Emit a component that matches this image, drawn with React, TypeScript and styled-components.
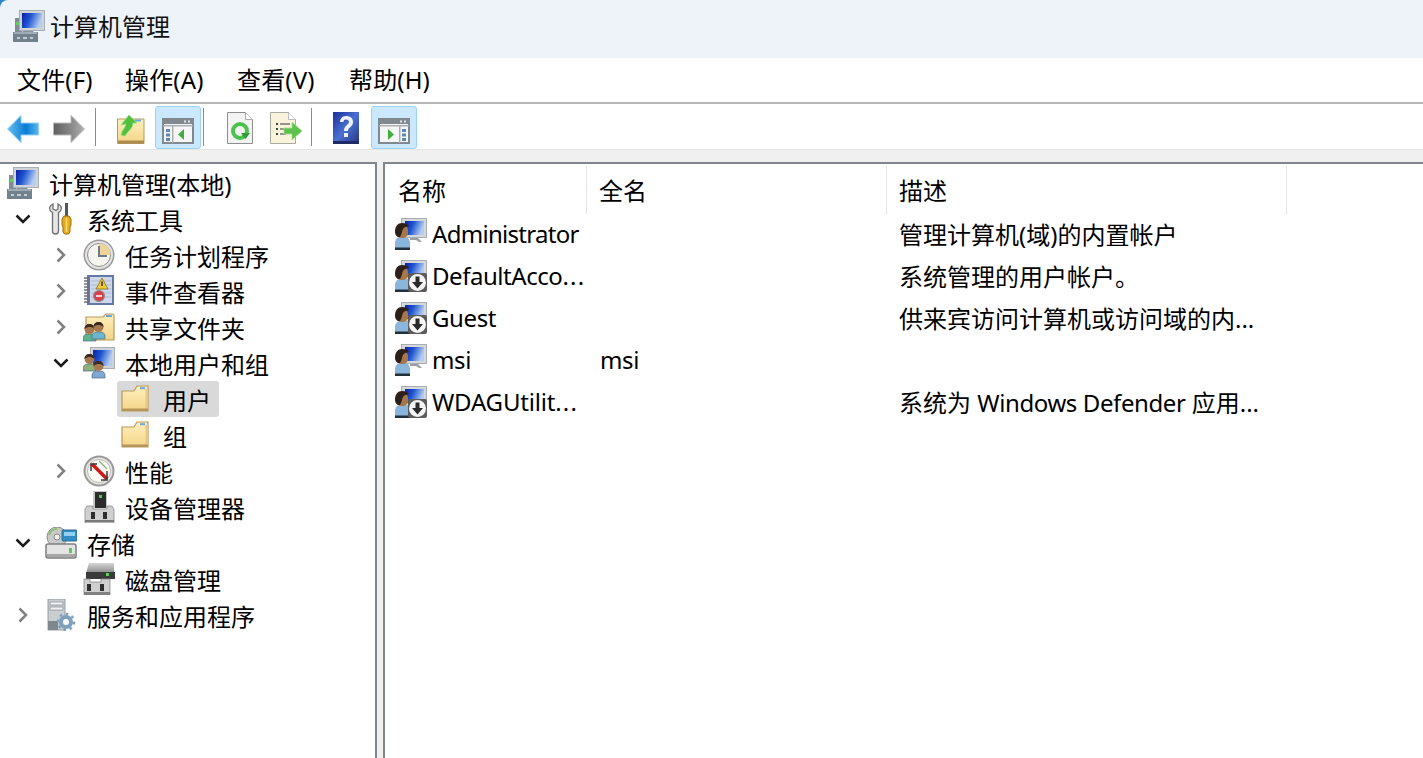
import React from 'react';
import styled, { createGlobalStyle } from 'styled-components';

const Global = createGlobalStyle`
  html, body { margin: 0; padding: 0; height: 100%; overflow: hidden; background: #fff; }
  #root { height: 100%; }
  * { box-sizing: border-box; }
  body { font-family: "Noto Sans", "Noto Sans CJK SC", "Liberation Sans", sans-serif; color: #000; }
`;

const Window = styled.div`
  width: 1423px; height: 758px; display: flex; flex-direction: column; overflow: hidden;
  background: #2f86c6;
`;
const TitleBar = styled.div`
  height: 58px; flex: none; display: flex; align-items: center; gap: 5px; padding: 0 0 6px 13px;
  background: #eef3fa; border-top-left-radius: 8px; font-size: 24px; color: #111;
`;
const TitleText = styled.span`
  padding-bottom: 2px;
`;
const MenuBar = styled.div`
  height: 44px; flex: none; display: grid; grid-template-columns: 108px 112px 112px auto; align-items: center; padding-left: 17px;
  background: #fff; font-size: 24px; letter-spacing: 0.15px;
`;
const MenuItem = styled.span`
  display: block; line-height: 44px; white-space: nowrap;
`;
const Rule = styled.div`
  height: 2px; flex: none; background: #b5b5b5;
`;
const Toolbar = styled.div`
  height: 46px; flex: none; display: flex; align-items: flex-start; padding-top: 2px; background: #fff; border-bottom: 1px solid #e6e6e6;
`;
const ToolButton = styled.div<{ $active?: boolean; $ml?: number; $pt: number }>`
  width: 46px; height: 43px; flex: none; display: flex; align-items: flex-start; justify-content: center;
  margin-left: ${p => p.$ml ?? 0}px; padding-top: ${p => p.$pt}px; border-radius: 3px;
  background: ${p => (p.$active ? '#cce8ff' : 'transparent')};
  border: 1px solid ${p => (p.$active ? '#99d1ff' : 'transparent')};
`;
const ToolSep = styled.div<{ $l: number; $r: number }>`
  width: 1px; height: 38px; flex: none; background: #8a8a8a;
  margin: 2px ${p => p.$r}px 0 ${p => p.$l}px;
`;
const Body = styled.div`
  flex: 1; min-height: 0; display: flex; gap: 6px; padding-top: 12px; background: #f0f0f0;
`;
const TreePane = styled.div`
  width: 377px; flex: none; background: #fff; padding-top: 1px;
  border-top: 2px solid #80868c; border-right: 2px solid #80868c;
`;
const TreeRow = styled.div<{ $level: number }>`
  height: 36px; display: flex; align-items: center; font-size: 24px; white-space: nowrap;
  padding-left: ${p => (p.$level === 0 ? 7 : 7 + 38 * (p.$level - 1))}px;
`;
const CaretSlot = styled.div`
  width: 38px; flex: none; display: flex; align-items: center; padding-left: 8px;
`;
const TreeLabel = styled.div<{ $selected?: boolean }>`
  height: 36px; display: flex; align-items: center; gap: 10px; border-radius: 3px; letter-spacing: 0.02px;
  ${p => p.$selected && 'background: #d9d9d9; margin-left: -4px; padding: 0 8px 0 4px;'}
`;
const ListPane = styled.div`
  flex: 1; min-width: 0; background: #fff; padding-top: 2px;
  border-top: 2px solid #80868c; border-left: 2px solid #80868c;
`;
const ListHead = styled.div`
  height: 48px; display: flex; font-size: 24px; margin-bottom: -1px;
`;
const HeadCell = styled.div<{ $w: number; $pad: number }>`
  width: ${p => p.$w}px; flex: none; display: flex; align-items: center;
  padding: 0 0 2px ${p => p.$pad}px;
  border-right: 1px solid #e5e5e5;
`;
const ListRow = styled.div`
  height: 42px; display: flex; align-items: center; font-size: 24px; white-space: nowrap;
`;
const NameCell = styled.div`
  width: 202px; flex: none; display: flex; align-items: center; gap: 5px; padding-left: 10px;
`;
const NameText = styled.span<{ $ls: number }>`
  padding-bottom: 2px; letter-spacing: ${p => p.$ls}px;
`;
const Dots = styled.span`
  letter-spacing: 1.2px;
`;
const FullCell = styled.div`
  width: 299px; flex: none; padding: 0 0 2px 13px; letter-spacing: -0.4px;
`;
const DescCell = styled.div`
  flex: 1; padding: 0 0 2px 13px;
`;
const Latin = styled.span`
  letter-spacing: -0.4px;
`;

const Svg = styled.svg`
  display: block; flex: none; filter: blur(0.35px);
`;
const I: React.FC<{ w?: number; h?: number; vb?: string; children: React.ReactNode }> = ({ w = 32, h = 32, vb = '0 0 32 32', children }) => (
  <Svg width={w} height={h} viewBox={vb}>{children}</Svg>
);

const HiddenSvg = styled.svg`
  position: absolute; width: 0; height: 0;
`;
const Defs = () => (
  <HiddenSvg>
    <defs>
      <linearGradient id="scr" x1="0" x2="1" y1="0" y2="0.3">
        <stop offset="0" stopColor="#0b1fa8" /><stop offset=".45" stopColor="#1e55d0" /><stop offset="1" stopColor="#b4cdf2" />
      </linearGradient>
      <linearGradient id="fold" x1="0" x2="0" y1="0" y2="1">
        <stop offset="0" stopColor="#fff0bd" /><stop offset="1" stopColor="#f4d488" />
      </linearGradient>
      <linearGradient id="blueArrow" x1="0" x2="1" y1="0" y2="0">
        <stop offset="0" stopColor="#67bff0" /><stop offset=".6" stopColor="#0a7ad6" /><stop offset="1" stopColor="#5cb8ee" />
      </linearGradient>
      <linearGradient id="grayArrow" x1="0" x2="1" y1="0" y2="0">
        <stop offset="0" stopColor="#5f5f5f" /><stop offset=".6" stopColor="#8b8b8b" /><stop offset="1" stopColor="#b0b0b0" />
      </linearGradient>
      <linearGradient id="helpBg" x1="0" x2="1" y1="0" y2="1">
        <stop offset="0" stopColor="#1a2f9c" /><stop offset=".5" stopColor="#4a70d0" /><stop offset="1" stopColor="#26357f" />
      </linearGradient>
      <linearGradient id="disk" x1="0" x2="0" y1="0" y2="1">
        <stop offset="0" stopColor="#d6d6d6" /><stop offset="1" stopColor="#8a8a8a" />
      </linearGradient>
    </defs>
  </HiddenSvg>
);

const Monitor: React.FC<{ x: number; y: number; w: number; h: number }> = ({ x, y, w, h }) => (
  <g>
    <rect x={x} y={y} width={w} height={h} fill="#a9b0b5" />
    <rect x={x + 1} y={y + 1} width={w - 2} height={h - 2} fill="#cfd4d8" />
    <rect x={x + 3} y={y + 3} width={w - 6} height={h - 6} fill="url(#scr)" />
  </g>
);

const ComputerIcon = () => (
  <I>
    <rect x="2" y="8" width="7" height="14" fill="#7f8c93" />
    <rect x="3" y="12" width="3" height="3" fill="#5fd05f" />
    <rect x="9" y="16" width="4" height="5" fill="#223" />
    <Monitor x={6} y={0} w={26} h={21} />
    <path d="M10 21h10l2 2H8z" fill="#8a9298" />
    <rect x="0" y="22" width="25" height="10" fill="#72828c" />
    <rect x="1" y="22" width="23" height="2" fill="#9eacb5" />
    <path d="M4 27h3v2H4zM10 27h4v2h-4zM17 27h3v2h-3z" fill="#c3ccd2" />
  </I>
);
const ToolsIcon = () => (
  <I>
    <g transform="translate(3 0)">
      <path d="M5 1c-3 1-4 4-3 6 .5 1.200 1.500 2 2.500 2.500V28c0 2 1 3 3 3s3-1 3-3V9.500c1-.5 2-1.300 2.500-2.500 1-2 0-5-3-6v5l-2 1.500-3-1.500z" fill="#e6e6e6" stroke="#6f6f6f" strokeWidth="1.300" />
      <rect x="17" y="0" width="3" height="13" fill="#555" />
      <path d="M16 13h5l2 3v6l-1 2v5l-1.500 2h-4l-1.500-2v-5l-1-2v-6z" fill="#e7ab1c" stroke="#9a6a10" strokeWidth="1" />
      <path d="M18.500 15v14" stroke="#ffdd77" strokeWidth="1.500" />
    </g>
  </I>
);
const ClockIcon = () => (
  <I>
    <circle cx="16" cy="16" r="15.500" fill="#9a9a9a" />
    <circle cx="16" cy="16" r="14" fill="#e4e4e4" />
    <circle cx="16" cy="16" r="11.500" fill="#f6f4ee" stroke="#8d8d8d" strokeWidth="1" />
    <path d="M16 16V4.500A11.500 11.500 0 0 1 27.500 16z" fill="#eed39d" />
    <path d="M16 7v10h8" fill="none" stroke="#6e7a86" strokeWidth="2" />
  </I>
);
const EventIcon = () => (
  <I>
    <rect x="4" y="0" width="27" height="30" fill="#6478a8" />
    <rect x="7" y="2" width="22" height="26" fill="#cfd8ea" />
    <path d="M8 6h20M8 10h20M8 14h20M8 18h20M8 22h20" stroke="#aebbd4" strokeWidth="1" />
    <path d="M1 3h5M1 6h5M1 9h5M1 12h5M1 15h5M1 18h5M1 21h5M1 24h5M1 27h5" stroke="#6e6e78" strokeWidth="1.500" />
    <path d="M19 3l6 11h-12z" fill="#f3c93a" stroke="#8c7216" strokeWidth=".8" />
    <rect x="18.300" y="6.500" width="1.500" height="4.500" fill="#333" />
    <circle cx="16" cy="21" r="5.500" fill="#d8404a" stroke="#8f8f8f" strokeWidth="1.200" />
    <rect x="13" y="20" width="6" height="2" fill="#f4d6d6" />
  </I>
);
const FolderIcon = () => (
  <I>
    <path d="M1 8h12l3-5h11v25H1z" fill="url(#fold)" stroke="#b59a5c" strokeWidth="1.200" />
    <path d="M16 3l-3 5" stroke="#c9ab68" strokeWidth="1" />
    <rect x="19" y="4.200" width="5" height="2" fill="#6ea7dd" />
    <rect x="24.500" y="6" width="2.500" height="22" fill="#e8c882" />
    <rect x="1" y="25.500" width="26" height="2.500" fill="#b5955a" />
  </I>
);
const Person: React.FC<{ x: number; y: number; body?: string }> = ({ x, y, body = '#7fb0d8' }) => (
  <g>
    <path d={`M${x} ${y + 17}v-3c0-2 2-4 4-4h5c2 0 4 2 4 4v3z`} fill={body} stroke="#4d6a85" strokeWidth=".7" />
    <circle cx={x + 6.500} cy={y + 5} r="5" fill="#a67850" />
    <path d={`M${x + 1.500} ${y + 5}c0-3 2-5 5-5s5 2 5 5c-2-1.500-3-2-5-2s-3 .5-5 2z`} fill="#3c2a20" />
  </g>
);
const SharedIcon = () => (
  <I>
    <path d="M3 6h17l3-3h7l1 1v25H3z" fill="url(#fold)" stroke="#b59a5c" strokeWidth="1.200" />
    <rect x="23" y="4" width="6" height="2" fill="#6ea7dd" />
    <Person x={0} y={13} body="#5db38a" />
    <Person x={9} y={11} body="#6cb6cf" />
  </I>
);
const GroupIcon = () => (
  <I>
    <Monitor x={7} y={0} w={25} h={22} />
    <Person x={0} y={7} body="#8db07a" />
    <Person x={9} y={14} body="#7fa8d2" />
  </I>
);
const PerfIcon = () => (
  <I>
    <circle cx="16" cy="16" r="15.500" fill="#999" />
    <circle cx="16" cy="16" r="13.500" fill="#e6e6e2" />
    <circle cx="16" cy="16" r="11.500" fill="#fbfaf4" stroke="#b9b9b0" strokeWidth="1" />
    <path d="M9 9l15 15" stroke="#d01818" strokeWidth="3.500" />
    <path d="M8 16V9h6M24 16v9h-6" fill="none" stroke="#3b3b3b" strokeWidth="1.500" />
    <path d="M16 6l8 8" stroke="#89b98c" strokeWidth="1.500" />
  </I>
);
const DeviceIcon = () => (
  <I>
    <rect x="10" y="0" width="14" height="17" fill="#c8c8c8" />
    <rect x="12" y="1" width="11" height="16" fill="#2c2c2c" />
    <rect x="16" y="4" width="3" height="3" fill="#4ed04e" />
    <path d="M4 15h6v3h14v-3h5l2 3v14H2V18z" fill="#cfcfcf" stroke="#8c8c8c" strokeWidth=".8" />
    <rect x="8" y="21" width="4" height="7" fill="#2d2d2d" />
    <rect x="20" y="21" width="4" height="7" fill="#2d2d2d" />
    <rect x="2" y="29" width="29" height="2" fill="#7a7a7a" />
  </I>
);
const StorageIcon = () => (
  <I>
    <circle cx="12" cy="10" r="10" fill="#c9c9c9" stroke="#8a8a8a" />
    <circle cx="12" cy="10" r="3" fill="#f2f2f2" stroke="#888" />
    <path d="M4 8a8 8 0 0 1 8-6" stroke="#8dbf6a" strokeWidth="2" fill="none" />
    <rect x="17" y="3" width="15" height="11" rx="1" fill="#2f8ec6" stroke="#2a6c96" />
    <rect x="19" y="5" width="11" height="4" fill="#8fd0ef" />
    <rect x="1" y="17" width="30" height="14" rx="2" fill="#e4e4e4" stroke="#7e7e7e" strokeWidth="1.500" />
    <rect x="2" y="27" width="28" height="3" fill="#a8a8a8" />
    <rect x="24" y="21" width="3" height="5" fill="#58cc58" />
  </I>
);
const DiskIcon = () => (
  <I>
    <path d="M6 0h25v10H3z" fill="url(#disk)" />
    <rect x="3" y="9" width="29" height="7" fill="#3a3a3a" />
    <rect x="23" y="10" width="3" height="3" fill="#56d456" />
    <path d="M1 16h6v3h11v-3h9v16H1z" fill="#cfcfcf" stroke="#8c8c8c" strokeWidth=".8" />
    <rect x="4" y="21" width="4" height="7" fill="#2d2d2d" />
    <rect x="17" y="21" width="4" height="7" fill="#2d2d2d" />
    <rect x="1" y="29" width="26" height="3" fill="#808080" />
  </I>
);
const ServicesIcon = () => (
  <I>
    <rect x="3" y="0" width="17" height="31" fill="#c9ced2" stroke="#868c90" strokeWidth=".8" />
    <rect x="5" y="3" width="13" height="3" fill="#eef1f3" stroke="#7a8085" strokeWidth=".6" />
    <rect x="5" y="8" width="13" height="3" fill="#eef1f3" stroke="#7a8085" strokeWidth=".6" />
    <rect x="3" y="22" width="10" height="9" fill="#7d888f" />
    <g transform="translate(21 23)">
      <circle r="7" fill="#7fa0bd" />
      <circle r="8" fill="none" stroke="#7fa0bd" strokeWidth="2.500" strokeDasharray="2.500 3.700" />
      <circle r="3" fill="#fff" />
    </g>
  </I>
);
const UserIcon: React.FC<{ down?: boolean }> = ({ down }) => (
  <I>
    <rect x="6" y="0" width="26" height="20" fill="#a7adb2" />
    <rect x="7" y="1" width="24" height="18" fill="#d4d8db" />
    <rect x="10" y="3" width="19" height="14" fill="url(#scr)" />
    <path d="M15 20h8l4 4h-3l-3-2h-6z" fill="#9aa0a5" />
    <path d="M0 31v-6c0-3 2-6 5-6h5c3 0 5 3 5 6v6z" fill="#8ab6dc" />
    <rect x="0" y="29.500" width="15" height="2.500" fill="#22303b" />
    <rect x="1" y="7" width="12" height="13" rx="5" fill="#a87748" />
    <path d="M0 14c0-6 3-9 7-9s6 1 7 3c-3 .5-5 1-6 3-1 1.500-1 5-3 8H3c-2-1-3-3-3-5z" fill="#2c2019" />
    {down && (
      <g>
        <rect x="13" y="13" width="19" height="19" rx="2" fill="#5c5c5c" />
        <circle cx="22.500" cy="22.500" r="8.500" fill="#f5f5f5" />
        <path d="M20.500 16.500h4v5.500h3.500l-5.500 6.500-5.500-6.500h3.500z" fill="#2a2a2a" />
      </g>
    )}
  </I>
);

const Caret: React.FC<{ open?: boolean }> = ({ open }) => (
  <Svg width="16" height="16" viewBox="0 0 16 16">
    {open
      ? <path d="M1.500 4.500L8 11l6.500-6.500" fill="none" stroke="#1a1a1a" strokeWidth="2.500" />
      : <path d="M4.500 1.500L11 8l-6.500 6.500" fill="none" stroke="#808080" strokeWidth="2.500" />}
  </Svg>
);

const BackIcon = () => (
  <I h={28} vb="0 0 32 28">
    <path d="M14 0.500L0.500 14 14 27.500V20h17.500V8H14z" fill="url(#blueArrow)" stroke="#8fd0f4" strokeWidth="1" />
  </I>
);
const ForwardIcon = () => (
  <I h={28} vb="0 0 32 28">
    <path d="M18 0.500L31.500 14 18 27.500V20H.5V8H18z" fill="url(#grayArrow)" stroke="#b8b8b8" strokeWidth="1" />
  </I>
);
const UpIcon = () => (
  <I w={28} h={29} vb="0 0 28 29">
    <path d="M.5 4h26.500v24.500H.5z" fill="url(#fold)" stroke="#b59a5c" />
    <rect x="1" y="25.500" width="26" height="3" fill="#ad8c50" />
    <rect x="18" y="4.500" width="6" height="2" fill="#6ea7dd" />
    <path d="M12 0l8 8h-4c0 5-5 8-8 13l-4-1c1-5 5-8 5-11l-5 1z" fill="#4fc040" stroke="#8ee07a" strokeWidth=".8" />
  </I>
);
const PanelFrame = () => (
  <g>
    <rect x="1" y="1" width="30" height="24" fill="#f6f6f6" stroke="#808890" strokeWidth="2" />
    <rect x="2" y="2" width="28" height="4" fill="#808890" />
    <rect x="22" y="2.500" width="2" height="2" fill="#e4e4e4" /><rect x="26" y="2.500" width="2" height="2" fill="#e4e4e4" />
    <rect x="1" y="7" width="30" height="1.500" fill="#a9aeb3" />
  </g>
);
const PanelLeftIcon = () => (
  <I h={26} vb="0 0 32 26">
    <PanelFrame />
    <rect x="10" y="8" width="1.500" height="17" fill="#a9aeb3" />
    <path d="M4 11h4v3H4zM4 15.500h4v3H4zM4 20h4v3H4z" fill="#5a86b8" />
    <path d="M22 11v11l-6-5.500z" fill="#3fae3f" />
  </I>
);
const PanelRightIcon = () => (
  <I h={26} vb="0 0 32 26">
    <PanelFrame />
    <rect x="21" y="8" width="1.500" height="17" fill="#a9aeb3" />
    <path d="M24 11h4v3h-4zM24 15.500h4v3h-4zM24 20h4v3h-4z" fill="#5a86b8" />
    <path d="M10 11v11l6-5.500z" fill="#3fae3f" />
  </I>
);
const RefreshIcon = () => (
  <I w={26} h={32} vb="0 0 26 32">
    <path d="M.5.500h18l7 7v24H.5z" fill="#f3f3f3" stroke="#8e8e8e" />
    <path d="M18.500.500v7h7" fill="#fff" stroke="#aaa" />
    <circle cx="13" cy="19" r="7" fill="none" stroke="#4cc24c" strokeWidth="4" />
    <path d="M14 21h9l-4.500 6z" fill="#2f9c35" />
  </I>
);
const ExportIcon = () => (
  <I w={33} h={32} vb="0 0 33 32">
    <path d="M.5.500h18l7 7v24H.5z" fill="#faf3dc" stroke="#a9a9a0" />
    <path d="M18.500.500v7h7" fill="#fff" stroke="#bbb" />
    <path d="M6 11h2v2H6zM6 16h2v2H6zM6 21h2v2H6z" fill="#444" />
    <path d="M10 12h10M10 17h6M10 22h6" stroke="#777" strokeWidth="1.500" />
    <path d="M14 16h8v-6l10 9-10 9v-6h-8z" fill="#5dc24d" stroke="#a4e08e" strokeWidth=".8" />
  </I>
);
const HelpIcon = () => (
  <Svg width="26" height="32" viewBox="0 0 26 32">
    <rect width="26" height="32" fill="url(#helpBg)" />
    <rect y="29" width="26" height="3" fill="#1d2a66" />
    <path d="M7 10c0-3 2-6 6-6s7 2 7 6c0 5-5 5-5 9h-4c0-6 5-6 5-9 0-1.500-1-2.500-3-2.500s-2.500 1-2.500 2.500z" fill="#eef2fb" />
    <rect x="11" y="21" width="4" height="4" fill="#eef2fb" />
  </Svg>
);

type Node = { level: number; text: string; icon: React.ReactNode; caret?: 'open' | 'closed'; selected?: boolean };
const tree: Node[] = [
  { level: 0, text: '计算机管理(本地)', icon: <ComputerIcon /> },
  { level: 1, text: '系统工具', icon: <ToolsIcon />, caret: 'open' },
  { level: 2, text: '任务计划程序', icon: <ClockIcon />, caret: 'closed' },
  { level: 2, text: '事件查看器', icon: <EventIcon />, caret: 'closed' },
  { level: 2, text: '共享文件夹', icon: <SharedIcon />, caret: 'closed' },
  { level: 2, text: '本地用户和组', icon: <GroupIcon />, caret: 'open' },
  { level: 3, text: '用户', icon: <FolderIcon />, selected: true },
  { level: 3, text: '组', icon: <FolderIcon /> },
  { level: 2, text: '性能', icon: <PerfIcon />, caret: 'closed' },
  { level: 2, text: '设备管理器', icon: <DeviceIcon /> },
  { level: 1, text: '存储', icon: <StorageIcon />, caret: 'open' },
  { level: 2, text: '磁盘管理', icon: <DiskIcon /> },
  { level: 1, text: '服务和应用程序', icon: <ServicesIcon />, caret: 'closed' },
];

const users = [
  { name: 'Administrator', dots: false, ls: -0.7, full: '', desc: <>管理计算机(域)的内置帐户</>, down: false },
  { name: 'DefaultAcco', dots: true, ls: -0.45, full: '', desc: <>系统管理的用户帐户。</>, down: true },
  { name: 'Guest', dots: false, ls: -0.4, full: '', desc: <>供来宾访问计算机或访问域的内...</>, down: true },
  { name: 'msi', dots: false, ls: -0.4, full: 'msi', desc: <></>, down: false },
  { name: 'WDAGUtilit', dots: true, ls: -0.2, full: '', desc: <>系统为 <Latin>Windows Defender</Latin> 应用...</>, down: true },
];

export default function App() {
  return (
    <Window>
      <Global />
      <Defs />
      <TitleBar><ComputerIcon /><TitleText>计算机管理</TitleText></TitleBar>
      <MenuBar>
        <MenuItem>文件(F)</MenuItem>
        <MenuItem>操作(A)</MenuItem>
        <MenuItem>查看(V)</MenuItem>
        <MenuItem>帮助(H)</MenuItem>
      </MenuBar>
      <Rule />
      <Toolbar>
        <ToolButton $pt={8}><BackIcon /></ToolButton>
        <ToolButton $pt={8}><ForwardIcon /></ToolButton>
        <ToolSep $l={3} $r={12} />
        <ToolButton $pt={8}><UpIcon /></ToolButton>
        <ToolButton $active $ml={1} $pt={11}><PanelLeftIcon /></ToolButton>
        <ToolSep $l={2} $r={13} />
        <ToolButton $pt={5}><RefreshIcon /></ToolButton>
        <ToolButton $pt={5}><ExportIcon /></ToolButton>
        <ToolSep $l={2} $r={11} />
        <ToolButton $pt={5}><HelpIcon /></ToolButton>
        <ToolButton $active $ml={2} $pt={11}><PanelRightIcon /></ToolButton>
      </Toolbar>
      <Body>
        <TreePane>
          {tree.map(n => (
            <TreeRow key={n.text} $level={n.level}>
              {n.level > 0 && (
                <CaretSlot>{n.caret && <Caret open={n.caret === 'open'} />}</CaretSlot>
              )}
              <TreeLabel $selected={n.selected}>{n.icon}{n.text}</TreeLabel>
            </TreeRow>
          ))}
        </TreePane>
        <ListPane>
          <ListHead>
            <HeadCell $w={202} $pad={13}>名称</HeadCell>
            <HeadCell $w={300} $pad={12}>全名</HeadCell>
            <HeadCell $w={400} $pad={12}>描述</HeadCell>
          </ListHead>
          {users.map(u => (
            <ListRow key={u.name}>
              <NameCell>
                <UserIcon down={u.down} />
                <NameText $ls={u.ls}>{u.name}{u.dots && <Dots>...</Dots>}</NameText>
              </NameCell>
              <FullCell>{u.full}</FullCell>
              <DescCell>{u.desc}</DescCell>
            </ListRow>
          ))}
        </ListPane>
      </Body>
    </Window>
  );
}
